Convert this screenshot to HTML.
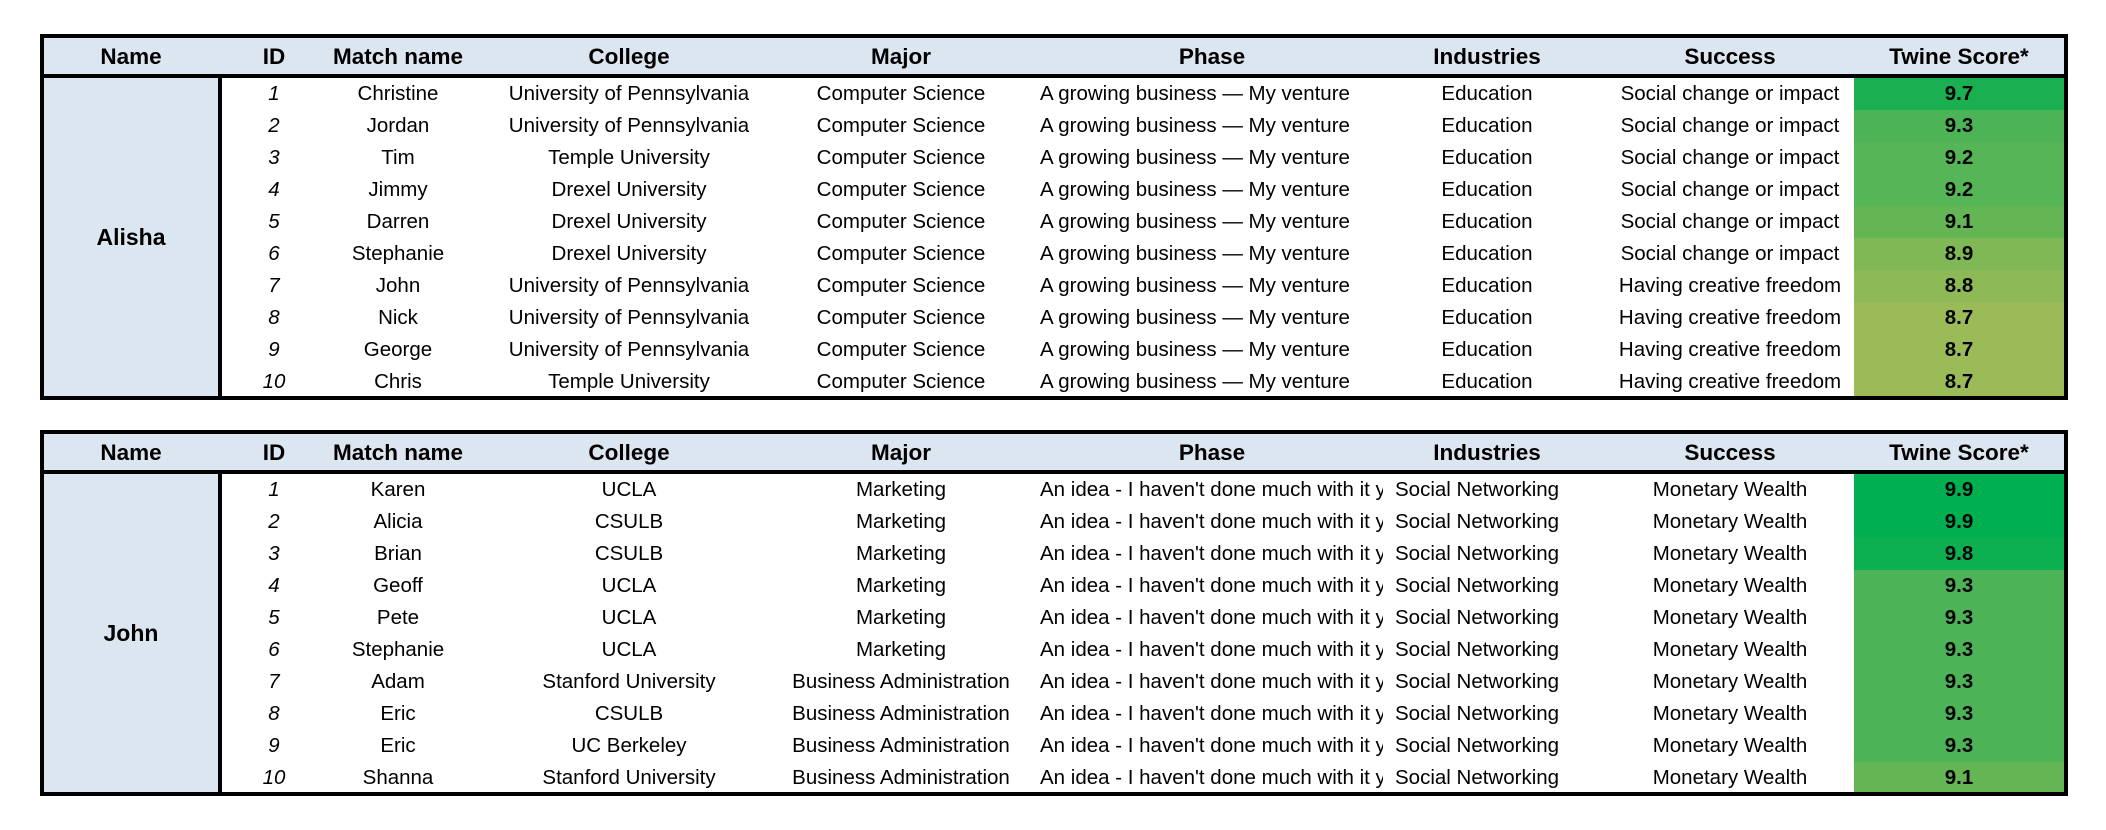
<!DOCTYPE html>
<html><head><meta charset="utf-8"><style>
body{margin:0;width:2106px;height:830px;background:#fff;font-family:"Liberation Sans",sans-serif;color:#000;position:relative;overflow:hidden}
.tb{position:absolute;left:40px;width:2028px;border:4px solid #000;box-sizing:border-box}
.hd{position:absolute;left:0;top:0;width:2020px;height:36px;background:#dce6f1;border-bottom:4px solid #000}
.nc{position:absolute;left:0;top:40px;width:174px;bottom:0;background:#dce6f1;border-right:4px solid #000;font-size:23px;font-weight:bold;display:flex;align-items:center;justify-content:center}
.h{position:absolute;top:0;height:36px;line-height:38px;font-size:22.5px;font-weight:bold;text-align:center;white-space:nowrap}
.r{position:absolute;left:0;width:2020px;height:32px;line-height:32px;font-size:20.5px;white-space:nowrap}
.r span{position:absolute;top:0;height:32px;text-align:center;overflow:hidden}
.a{left:200px;width:60px;font-style:italic}
.m{left:274px;width:160px}
.c{left:445px;width:280px}
.j{left:727px;width:260px}
.p{left:996px;width:343px;text-align:left!important}
.i{left:1353px;width:180px}
.il{left:1351px;width:200px;text-align:left!important}
.s{left:1546px;width:280px}
.t{left:1810px;width:210px;font-weight:bold}
</style></head><body>

<div class="tb" style="top:34px;height:366px">
<div class="hd"></div>
<div class="h" style="left:37px;width:100px">Name</div>
<div class="h" style="left:200px;width:60px">ID</div>
<div class="h" style="left:264px;width:180px">Match name</div>
<div class="h" style="left:485px;width:200px">College</div>
<div class="h" style="left:757px;width:200px">Major</div>
<div class="h" style="left:1068px;width:200px">Phase</div>
<div class="h" style="left:1343px;width:200px">Industries</div>
<div class="h" style="left:1586px;width:200px">Success</div>
<div class="h" style="left:1805px;width:220px">Twine Score*</div>
<div class="nc">Alisha</div>
<div class="r" style="top:40px"><span class="a">1</span><span class="m">Christine</span><span class="c">University of Pennsylvania</span><span class="j">Computer Science</span><span class="p">A growing business — My venture</span><span class="i">Education</span><span class="s">Social change or impact</span><span class="t" style="background:#1aaf51">9.7</span></div>
<div class="r" style="top:72px"><span class="a">2</span><span class="m">Jordan</span><span class="c">University of Pennsylvania</span><span class="j">Computer Science</span><span class="p">A growing business — My venture</span><span class="i">Education</span><span class="s">Social change or impact</span><span class="t" style="background:#4cb457">9.3</span></div>
<div class="r" style="top:104px"><span class="a">3</span><span class="m">Tim</span><span class="c">Temple University</span><span class="j">Computer Science</span><span class="p">A growing business — My venture</span><span class="i">Education</span><span class="s">Social change or impact</span><span class="t" style="background:#56b556">9.2</span></div>
<div class="r" style="top:136px"><span class="a">4</span><span class="m">Jimmy</span><span class="c">Drexel University</span><span class="j">Computer Science</span><span class="p">A growing business — My venture</span><span class="i">Education</span><span class="s">Social change or impact</span><span class="t" style="background:#56b556">9.2</span></div>
<div class="r" style="top:168px"><span class="a">5</span><span class="m">Darren</span><span class="c">Drexel University</span><span class="j">Computer Science</span><span class="p">A growing business — My venture</span><span class="i">Education</span><span class="s">Social change or impact</span><span class="t" style="background:#64b655">9.1</span></div>
<div class="r" style="top:200px"><span class="a">6</span><span class="m">Stephanie</span><span class="c">Drexel University</span><span class="j">Computer Science</span><span class="p">A growing business — My venture</span><span class="i">Education</span><span class="s">Social change or impact</span><span class="t" style="background:#7fb854">8.9</span></div>
<div class="r" style="top:232px"><span class="a">7</span><span class="m">John</span><span class="c">University of Pennsylvania</span><span class="j">Computer Science</span><span class="p">A growing business — My venture</span><span class="i">Education</span><span class="s">Having creative freedom</span><span class="t" style="background:#8db957">8.8</span></div>
<div class="r" style="top:264px"><span class="a">8</span><span class="m">Nick</span><span class="c">University of Pennsylvania</span><span class="j">Computer Science</span><span class="p">A growing business — My venture</span><span class="i">Education</span><span class="s">Having creative freedom</span><span class="t" style="background:#9bbb59">8.7</span></div>
<div class="r" style="top:296px"><span class="a">9</span><span class="m">George</span><span class="c">University of Pennsylvania</span><span class="j">Computer Science</span><span class="p">A growing business — My venture</span><span class="i">Education</span><span class="s">Having creative freedom</span><span class="t" style="background:#9bbb59">8.7</span></div>
<div class="r" style="top:328px;height:30px"><span class="a">10</span><span class="m">Chris</span><span class="c">Temple University</span><span class="j">Computer Science</span><span class="p">A growing business — My venture</span><span class="i">Education</span><span class="s">Having creative freedom</span><span class="t" style="background:#9bbb59;height:30px">8.7</span></div>
</div>

<div class="tb" style="top:430px;height:366px">
<div class="hd"></div>
<div class="h" style="left:37px;width:100px">Name</div>
<div class="h" style="left:200px;width:60px">ID</div>
<div class="h" style="left:264px;width:180px">Match name</div>
<div class="h" style="left:485px;width:200px">College</div>
<div class="h" style="left:757px;width:200px">Major</div>
<div class="h" style="left:1068px;width:200px">Phase</div>
<div class="h" style="left:1343px;width:200px">Industries</div>
<div class="h" style="left:1586px;width:200px">Success</div>
<div class="h" style="left:1805px;width:220px">Twine Score*</div>
<div class="nc">John</div>
<div class="r" style="top:40px"><span class="a">1</span><span class="m">Karen</span><span class="c">UCLA</span><span class="j">Marketing</span><span class="p">An idea - I haven't done much with it yet</span><span class="il">Social Networking</span><span class="s">Monetary Wealth</span><span class="t" style="background:#00b050">9.9</span></div>
<div class="r" style="top:72px"><span class="a">2</span><span class="m">Alicia</span><span class="c">CSULB</span><span class="j">Marketing</span><span class="p">An idea - I haven't done much with it yet</span><span class="il">Social Networking</span><span class="s">Monetary Wealth</span><span class="t" style="background:#00b050">9.9</span></div>
<div class="r" style="top:104px"><span class="a">3</span><span class="m">Brian</span><span class="c">CSULB</span><span class="j">Marketing</span><span class="p">An idea - I haven't done much with it yet</span><span class="il">Social Networking</span><span class="s">Monetary Wealth</span><span class="t" style="background:#0cb050">9.8</span></div>
<div class="r" style="top:136px"><span class="a">4</span><span class="m">Geoff</span><span class="c">UCLA</span><span class="j">Marketing</span><span class="p">An idea - I haven't done much with it yet</span><span class="il">Social Networking</span><span class="s">Monetary Wealth</span><span class="t" style="background:#4cb457">9.3</span></div>
<div class="r" style="top:168px"><span class="a">5</span><span class="m">Pete</span><span class="c">UCLA</span><span class="j">Marketing</span><span class="p">An idea - I haven't done much with it yet</span><span class="il">Social Networking</span><span class="s">Monetary Wealth</span><span class="t" style="background:#4cb457">9.3</span></div>
<div class="r" style="top:200px"><span class="a">6</span><span class="m">Stephanie</span><span class="c">UCLA</span><span class="j">Marketing</span><span class="p">An idea - I haven't done much with it yet</span><span class="il">Social Networking</span><span class="s">Monetary Wealth</span><span class="t" style="background:#4cb457">9.3</span></div>
<div class="r" style="top:232px"><span class="a">7</span><span class="m">Adam</span><span class="c">Stanford University</span><span class="j">Business Administration</span><span class="p">An idea - I haven't done much with it yet</span><span class="il">Social Networking</span><span class="s">Monetary Wealth</span><span class="t" style="background:#4cb457">9.3</span></div>
<div class="r" style="top:264px"><span class="a">8</span><span class="m">Eric</span><span class="c">CSULB</span><span class="j">Business Administration</span><span class="p">An idea - I haven't done much with it yet</span><span class="il">Social Networking</span><span class="s">Monetary Wealth</span><span class="t" style="background:#4cb457">9.3</span></div>
<div class="r" style="top:296px"><span class="a">9</span><span class="m">Eric</span><span class="c">UC Berkeley</span><span class="j">Business Administration</span><span class="p">An idea - I haven't done much with it yet</span><span class="il">Social Networking</span><span class="s">Monetary Wealth</span><span class="t" style="background:#4cb457">9.3</span></div>
<div class="r" style="top:328px;height:30px"><span class="a">10</span><span class="m">Shanna</span><span class="c">Stanford University</span><span class="j">Business Administration</span><span class="p">An idea - I haven't done much with it yet</span><span class="il">Social Networking</span><span class="s">Monetary Wealth</span><span class="t" style="background:#64b655;height:30px">9.1</span></div>
</div>
</body></html>
